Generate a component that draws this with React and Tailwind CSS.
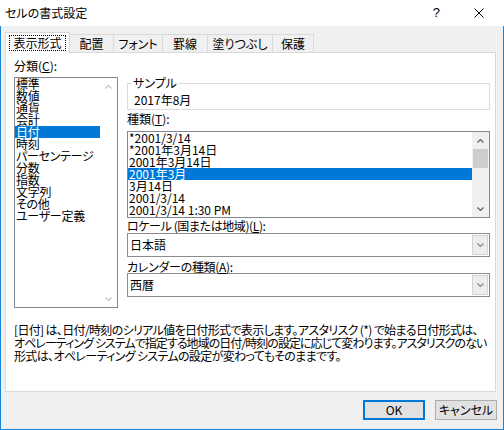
const CATEGORIES = [
  "標準",
  "数値",
  "通貨",
  "会計",
  "日付",
  "時刻",
  "パーセンテージ",
  "分数",
  "指数",
  "文字列",
  "その他",
  "ユーザー定義",
];

const TYPES = [
  "*2001/3/14",
  "*2001年3月14日",
  "2001年3月14日",
  "2001年3月",
  "3月14日",
  "2001/3/14",
  "2001/3/14 1:30 PM",
];

const TABS = [
  { label: "配置", w: "w-[44px]" },
  { label: "フォント", w: "w-[49px]" },
  { label: "罫線", w: "w-[45px]" },
  { label: "塗りつぶし", w: "w-[65px]" },
  { label: "保護", w: "w-[41px]" },
];

function Chevron({ down = false, color = "#606060" }) {
  return (
    <svg width="7" height="4" viewBox="0 0 7 4" fill="none">
      <path
        d={down ? "M0.5 0.5 L3.5 3.5 L6.5 0.5" : "M0.5 3.5 L3.5 0.5 L6.5 3.5"}
        stroke={color}
        strokeWidth="1.2"
      />
    </svg>
  );
}

function Dropdown({ value }) {
  return (
    <div className="flex h-[24px] items-center border border-[#8c8c8c] bg-white">
      <span className="pl-[2px]">{value}</span>
      <span className="ml-auto mr-px flex h-[20px] w-[16px] items-center justify-center border border-[#d4d4d4] bg-[#ececec]">
        <Chevron down color="#8a8a8a" />
      </span>
    </div>
  );
}

export default function App() {
  return (
    <div className="flex h-[430px] w-[504px] flex-col overflow-hidden bg-[#f0f0f0] font-['Noto_Sans_CJK_JP',sans-serif] text-[12px] leading-[12px] text-black [font-feature-settings:'palt']">
      <div className="flex h-[26px] shrink-0 items-center bg-white pl-[5px] pr-[20px]">
        <span>セルの書式設定</span>
        <span className="ml-auto mr-[34px] font-['Liberation_Sans',sans-serif] text-[13px]">?</span>
        <svg width="10" height="10" viewBox="0 0 10 10">
          <path d="M0.5 0.5 L9.5 9.5 M9.5 0.5 L0.5 9.5" stroke="#000" strokeWidth="1" />
        </svg>
      </div>

      <div className="flex flex-1 flex-col border-x border-b border-[#1883d7] pl-[4px] pr-[7px]">
        {/* tabs */}
        <div className="relative z-10 mt-[6px] flex h-[20px] items-end">
          <div className="-mb-px flex h-[21px] w-[65px] items-center justify-center border-x border-t border-[#d9d9d9] bg-white">
            <span className="border border-dotted border-black px-[3px] py-[1px]">表示形式</span>
          </div>
          {TABS.map((t) => (
            <div
              key={t.label}
              className={`flex h-[18px] items-center justify-center border-t border-r border-[#d9d9d9] ${t.w}`}
            >
              {t.label}
            </div>
          ))}
        </div>

        {/* panel */}
        <div className="flex h-[340px] flex-col border border-[#d9d9d9] bg-white pl-[8px] pr-[5px]">
          <div className="flex gap-[9px]">
            <div className="w-[104px] pt-[7px]">
              <div className="mb-[5px] h-[12px]">分類(<span className="underline">C</span>):</div>
              <div className="flex h-[231px] border border-[#828790]">
                <div className="flex-1">
                  {CATEGORIES.map((c) => (
                    <div
                      key={c}
                      className={`h-[12px] whitespace-nowrap pl-px tracking-[-0.3px] ${c === "日付" ? "bg-[#0078d7] text-white" : ""}`}
                    >
                      {c}
                    </div>
                  ))}
                </div>
                <div className="flex w-[17px] flex-col">
                  <div className="flex h-[17px] items-center justify-center">
                    <Chevron color="#c4c4c4" />
                  </div>
                  <div className="flex-1" />
                  <div className="flex h-[17px] items-center justify-center">
                    <Chevron down color="#c4c4c4" />
                  </div>
                </div>
              </div>
            </div>

            <div className="flex-1 pt-[24px]">
              <fieldset className="border border-[#dcdcdc] pb-[3px] pl-[4px]">
                <legend className="px-px leading-[12px]">サンプル</legend>
                <div className="pl-[2px] pt-[5px]">2017年8月</div>
              </fieldset>

              <div className="mt-[3px] h-[12px]">種類(<span className="underline">T</span>):</div>
              <div className="mt-[6px] flex h-[87px] border border-[#828790]">
                <div className="flex-1">
                  {TYPES.map((t) => (
                    <div
                      key={t}
                      className={`h-[12px] whitespace-nowrap pl-px ${t === "2001年3月" ? "bg-[#0078d7] text-white" : ""}`}
                    >
                      {t}
                    </div>
                  ))}
                </div>
                <div className="flex w-[17px] flex-col bg-[#f0f0f0]">
                  <div className="flex h-[17px] items-center justify-center">
                    <Chevron />
                  </div>
                  <div className="mx-px h-[19px] bg-[#cdcdcd]" />
                  <div className="flex-1" />
                  <div className="flex h-[17px] items-center justify-center">
                    <Chevron down />
                  </div>
                </div>
              </div>

              <div className="mt-[2px] h-[12px] tracking-[-0.4px]">ロケール (国または地域)(<span className="underline">L</span>):</div>
              <div className="mt-px">
                <Dropdown value="日本語" />
              </div>
              <div className="mt-[4px] h-[12px] tracking-[-0.3px]">カレンダーの種類(<span className="underline">A</span>):</div>
              <Dropdown value="西暦" />
            </div>
          </div>

          <div className="mt-[15px] whitespace-nowrap leading-[13px] tracking-[-0.65px]">
            <div>[日付] は、日付/時刻のシリアル値を日付形式で表示します。アスタリスク (*) で始まる日付形式は、</div>
            <div className="tracking-[-0.95px]">
              オペレーティング システムで指定する地域の日付/時刻の設定に応じて変わります。アスタリスクのない
            </div>
            <div>形式は、オペレーティング システムの設定が変わってもそのままです。</div>
          </div>
        </div>

        <div className="-mr-px mt-[8px] flex justify-end gap-[10px]">
          <button type="button" className="h-[20px] w-[62px] border-2 border-[#0078d7] bg-[#e1e1e1] leading-[12px]">
            OK
          </button>
          <button type="button" className="h-[20px] w-[62px] border border-[#adadad] bg-[#e1e1e1] leading-[12px]">
            キャンセル
          </button>
        </div>
      </div>
    </div>
  );
}
